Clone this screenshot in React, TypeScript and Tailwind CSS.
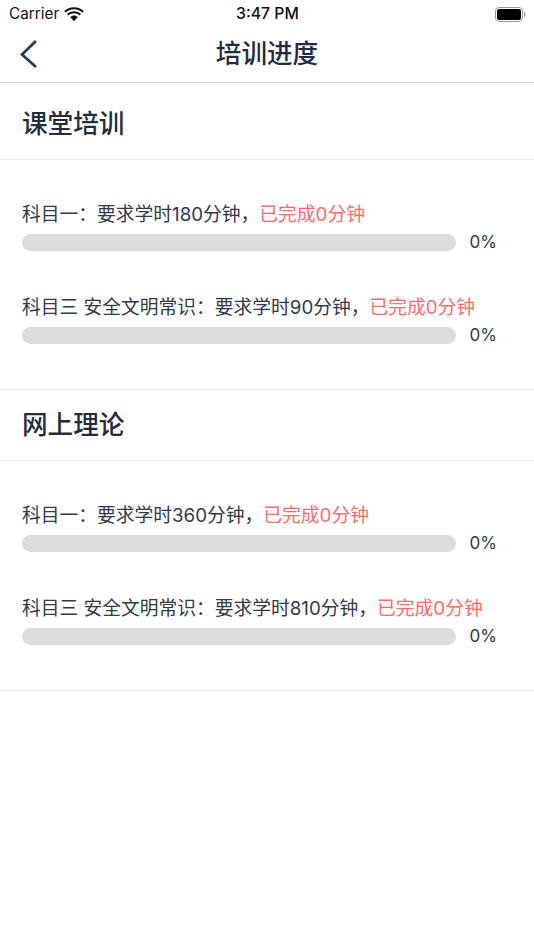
import React from 'react';

const font = "font-['Inter','Noto_Sans_CJK_SC',sans-serif]";

const Row = ({ label, done }: { label: string; done: string }) => (
  <div className="h-[93px] pl-[22px] pr-[37px]">
    <div className="h-[37px] pt-[4px] text-[18.75px] leading-[27px] whitespace-nowrap text-[#2f3a4a]">
      {label}
      <span className="text-[#ff6b6b]">{done}</span>
    </div>
    <div className="flex items-center justify-between">
      <div className="h-[17px] w-[434px] rounded-full bg-[#dcdcdc]" />
      <span className="text-[17px] leading-[17px] text-[#2f3a4a]">0%</span>
    </div>
  </div>
);

const Section = ({ title, first, children }: { title: string; first?: boolean; children: React.ReactNode }) => (
  <section className={first ? 'border-b border-[#ececec] pt-[6px]' : 'border-b border-[#ececec]'}>
    <h2 className="flex h-[71px] items-center border-b border-[#ececec] pl-[22px] text-[25.6px] font-medium text-[#1f2d3d]">
      {title}
    </h2>
    <div className="pt-[37px] pb-[6px]">{children}</div>
  </section>
);

export default function App() {
  return (
    <div className={`h-[950px] w-[534px] bg-white ${font}`}>
      <div className="relative flex h-[27px] items-center justify-between pl-[9px] pr-[7px] pt-[1px] text-[15.3px] text-[#111]">
        <div className="flex items-center gap-[5px]">
          <span>Carrier</span>
          <svg width="20" height="15" viewBox="0 0 20 15" fill="#111">
            <path d="M10 2.200c3.300 0 6.300 1.300 8.500 3.400l1.300-1.500C17.300 1.700 13.800.2 10 .2S2.700 1.700.2 4.100l1.300 1.500C3.700 3.500 6.700 2.200 10 2.200z" />
            <path d="M10 6.300c2.200 0 4.100.8 5.600 2.200l1.300-1.500C15.100 5.300 12.700 4.300 10 4.300S4.900 5.300 3.100 7l1.300 1.500C5.900 7.100 7.800 6.300 10 6.300z" />
            <path d="M10 8.400c-1.500 0-2.800.6-3.800 1.500L10 14.300l3.800-4.400c-1-.9-2.300-1.500-3.800-1.500z" />
          </svg>
        </div>
        <span className="absolute left-[236px] top-[1px] text-[15.8px] font-medium leading-[26px]">3:47 PM</span>
        <svg width="32" height="15" viewBox="0 0 32 15">
          <rect x="0.500" y="0.500" width="27" height="14" rx="3.500" fill="none" stroke="#9a9a9a" />
          <rect x="2" y="2" width="24" height="11" rx="2.200" fill="#000" />
          <path d="M29 5v5c1-.3 1.600-1.300 1.600-2.500S30 5.300 29 5z" fill="#9a9a9a" />
        </svg>
      </div>

      <header className="relative flex h-[56px] items-center justify-center border-b border-[#d8d8d8]">
        <svg className="absolute left-[19px] top-[12px]" width="20" height="30" viewBox="0 0 20 30" fill="none">
          <path d="M17 2 3 15.500 17 28" stroke="#2b3b4e" strokeWidth="2.800" />
        </svg>
        <h1 className="text-[25.6px] font-medium text-[#1f2d3d]">培训进度</h1>
      </header>

      <Section first title="课堂培训">
        <Row label="科目一：要求学时180分钟，" done="已完成0分钟" />
        <Row label="科目三 安全文明常识：要求学时90分钟，" done="已完成0分钟" />
      </Section>
      <Section title="网上理论">
        <Row label="科目一：要求学时360分钟，" done="已完成0分钟" />
        <Row label="科目三 安全文明常识：要求学时810分钟，" done="已完成0分钟" />
      </Section>
    </div>
  );
}
